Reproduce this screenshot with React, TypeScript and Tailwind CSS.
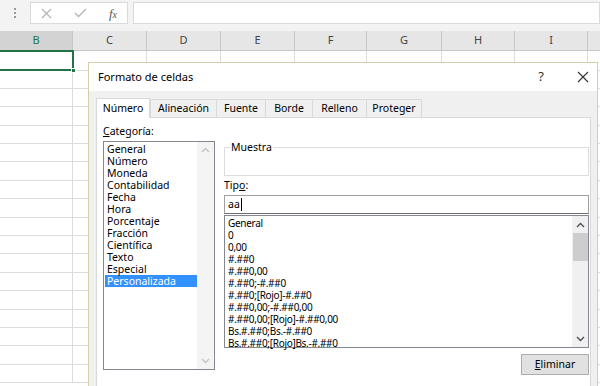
import React from "react";

const cols = [
  { l: "B", w: 73 },
  { l: "C", w: 74 },
  { l: "D", w: 74 },
  { l: "E", w: 74 },
  { l: "F", w: 72 },
  { l: "G", w: 75 },
  { l: "H", w: 73 },
  { l: "I", w: 73 },
  { l: "", w: 74 },
];

const categories = [
  "General",
  "Número",
  "Moneda",
  "Contabilidad",
  "Fecha",
  "Hora",
  "Porcentaje",
  "Fracción",
  "Científica",
  "Texto",
  "Especial",
  "Personalizada",
];

const formats = [
  "General",
  "0",
  "0,00",
  "#.##0",
  "#.##0,00",
  "#.##0;-#.##0",
  "#.##0;[Rojo]-#.##0",
  "#.##0,00;-#.##0,00",
  "#.##0,00;[Rojo]-#.##0,00",
  "Bs.#.##0;Bs.-#.##0",
  "Bs.#.##0;[Rojo]Bs.-#.##0",
];

const tabs = [
  { l: "Número", w: 54 },
  { l: "Alineación", w: 66 },
  { l: "Fuente", w: 49 },
  { l: "Borde", w: 47 },
  { l: "Relleno", w: 54 },
  { l: "Proteger", w: 56 },
];

function Chevron({ up, color }: { up: boolean; color: string }) {
  return (
    <svg width="9" height="6" viewBox="0 0 9 6">
      <polyline
        points={up ? "1,5 4.5,1.5 8,5" : "1,1 4.5,4.5 8,1"}
        fill="none"
        stroke={color}
        strokeWidth="1.4"
      />
    </svg>
  );
}

export default function App() {
  const rows = Array.from({ length: 18 });
  return (
    <div className="relative w-[600px] h-[386px] overflow-hidden bg-white font-['Noto_Sans','DejaVu_Sans',sans-serif] text-black">
      {/* Formula bar */}
      <div className="h-[31px] bg-[#f3f3f3] flex items-start pt-[2px]">
        <div className="w-[30px] h-[22px] flex items-center justify-center">
          <div className="flex flex-col gap-[2px] items-center">
            <div className="w-[2px] h-[2px] bg-[#9a9a9a]" />
            <div className="w-[2px] h-[2px] bg-[#9a9a9a]" />
            <div className="w-[2px] h-[2px] bg-[#9a9a9a]" />
          </div>
        </div>
        <div className="w-[98px] h-[22px] bg-white border border-[#dadada] flex items-center">
          <div className="w-[30px] flex justify-center">
            <svg width="11" height="11" viewBox="0 0 11 11">
              <path d="M1 1L10 10M10 1L1 10" stroke="#b4b4b4" strokeWidth="1.2" />
            </svg>
          </div>
          <div className="w-[38px] flex justify-center">
            <svg width="13" height="10" viewBox="0 0 13 10">
              <path d="M1 5L4.5 8.5L12 1" fill="none" stroke="#b4b4b4" strokeWidth="1.3" />
            </svg>
          </div>
          <div className="w-[28px] flex justify-center items-baseline font-['Liberation_Serif',serif] italic text-[13px] text-[#555] leading-none">
            <span>f</span>
            <span className="text-[10px]">x</span>
          </div>
        </div>
        <div className="ml-[5px] flex-1 h-[22px] bg-white border border-[#dadada]" />
      </div>

      {/* Column headers */}
      <div className="h-[20px] flex bg-[#e6e6e6] border-b border-[#c6c6c6]">
        {cols.map((c, i) => (
          <div
            key={i}
            style={{ width: c.w }}
            className={
              "shrink-0 flex items-center justify-center text-[11px] border-r border-[#c8c8c8] " +
              (c.l === "B" ? "bg-[#d3d3d3] text-[#217346]" : "text-[#444]")
            }
          >
            {c.l}
          </div>
        ))}
      </div>

      {/* Grid */}
      <div className="relative">
        {rows.map((_, i) => (
          <div key={i} className={"flex " + (i === 0 ? "h-[19.5px]" : "h-[18.4px]")}>
            {cols.map((c, j) => (
              <div
                key={j}
                style={{ width: c.w }}
                className="shrink-0 border-r border-b border-[#dcdcdc]"
              />
            ))}
          </div>
        ))}
        {/* selected cell */}
        <div className="absolute left-[-2px] top-[-1px] w-[76px] h-[21px] border-2 border-[#217346]" />
        <div className="absolute left-[71px] top-[17px] w-[5px] h-[5px] bg-[#217346] border border-white" />
      </div>

      {/* Dialog */}
      <div className="absolute left-[88px] top-[62px] w-[510px] h-[340px] border border-[#d8ccaa] bg-[#f0f0f0] flex flex-col">
        <div className="h-[28px] bg-white flex items-center pl-[9px] pr-[8px] text-[11px] shrink-0">
          <span>Formato de celdas</span>
          <span className="ml-auto text-[13px] text-[#333] mr-[33px]">?</span>
          <svg width="12" height="12" viewBox="0 0 12 12">
            <path d="M1 1L11 11M11 1L1 11" stroke="#333" strokeWidth="1.1" />
          </svg>
        </div>
        <div className="pl-[7px] pt-[6px] flex flex-col flex-1">
          {/* Tabs */}
          <div className="flex items-end h-[20px] text-[10.5px]">
            {tabs.map((t, i) => (
              <div
                key={t.l}
                style={{ width: t.w }}
                className={
                  "shrink-0 flex items-center justify-center border-t border-l border-[#d9d9d9] " +
                  (i === 0
                    ? "h-[20px] bg-white border-r mb-[-1px] relative z-10"
                    : "h-[18px] bg-[#f0f0f0] " + (i === tabs.length - 1 ? "border-r" : ""))
                }
              >
                {t.l}
              </div>
            ))}
          </div>
          {/* Panel */}
          <div className="w-[495px] flex-1 bg-white border border-[#d9d9d9] flex pl-[6px] pt-[6px] text-[10.5px]">
            {/* Left column */}
            <div className="w-[112px] flex flex-col">
              <div className="h-[17px] leading-[15px]">
                <span className="underline">C</span>ategoría:
              </div>
              <div className="h-[229px] border border-[#828790] flex">
                <div className="flex-1 pt-[1px] pl-[1px]">
                  {categories.map((c) => (
                    <div
                      key={c}
                      className={
                        "h-[12px] leading-[12px] pl-[2px] " +
                        (c === "Personalizada" ? "bg-[#3391ff] text-white" : "")
                      }
                    >
                      {c}
                    </div>
                  ))}
                </div>
                <div className="w-[17px] bg-[#f4f4f4] flex flex-col items-center justify-between py-[5px]">
                  <Chevron up color="#c4c4c4" />
                  <Chevron up={false} color="#c4c4c4" />
                </div>
              </div>
            </div>
            {/* Right column */}
            <div className="ml-[9px] w-[365px] flex flex-col">
              <div className="relative mt-[23px] h-[29px] border border-[#dcdcdc]">
                <span className="absolute left-[5px] top-[-9px] bg-white px-[1px] leading-[16px]">
                  Muestra
                </span>
              </div>
              <div className="mt-[1px] h-[18px] leading-[16px]">
                Tip<span className="underline">o</span>:
              </div>
              <div className="h-[19px] border border-[#a0a0a0] border-b-[#6e6e6e] flex items-center pl-[3px]">
                <span>aa</span>
                <span className="w-[1px] h-[13px] bg-black ml-[1px]" />
              </div>
              <div className="mt-[1px] h-[133px] border border-[#828790] flex">
                <div className="flex-1 pt-[1px] pl-[3px] text-[10px] tracking-[-0.3px]">
                  {formats.map((f) => (
                    <div key={f} className="h-[12px] leading-[12px]">
                      {f}
                    </div>
                  ))}
                </div>
                <div className="w-[16px] bg-[#f0f0f0] flex flex-col items-center">
                  <div className="h-[17px] flex items-center justify-center">
                    <Chevron up color="#505050" />
                  </div>
                  <div className="w-[15px] h-[28px] bg-[#cdcdcd]" />
                  <div className="flex-1" />
                  <div className="h-[17px] flex items-center justify-center">
                    <Chevron up={false} color="#505050" />
                  </div>
                </div>
              </div>
              <div className="mt-[6px] self-end w-[68px] h-[21px] bg-[#e1e1e1] border border-[#adadad] flex items-center justify-center">
                <span>
                  <span className="underline">E</span>liminar
                </span>
              </div>
            </div>
          </div>
        </div>
      </div>
    </div>
  );
}
